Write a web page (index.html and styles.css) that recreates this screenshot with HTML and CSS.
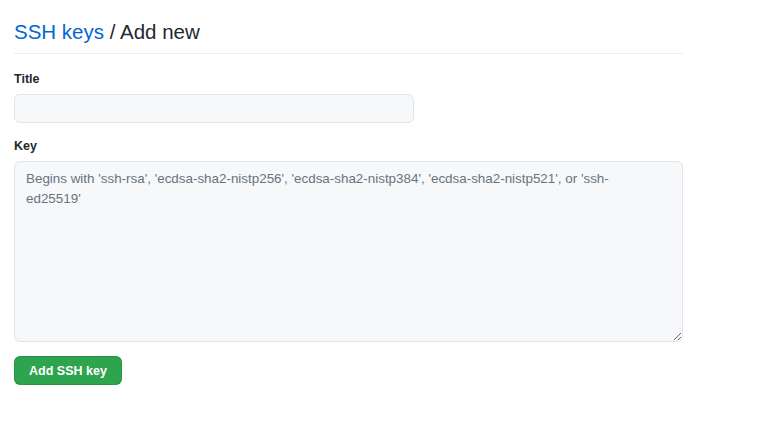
FILE: index.html
```html
<!DOCTYPE html>
<html lang="en">
<head>
<meta charset="utf-8">
<title>SSH keys / Add new</title>
<link rel="stylesheet" href="styles.css">
</head>
<body>
<main class="page">
  <div class="subhead">
    <h1 class="subhead-heading"><a class="crumb" href="#">SSH keys</a> / Add new</h1>
  </div>
  <form class="form">
    <div class="form-group">
      <label class="form-label" for="title">Title</label>
      <input class="input input-title" type="text" id="title">
    </div>
    <div class="form-group">
      <label class="form-label" for="key">Key</label>
      <textarea class="input input-key" id="key" placeholder="Begins with 'ssh-rsa', 'ecdsa-sha2-nistp256', 'ecdsa-sha2-nistp384', 'ecdsa-sha2-nistp521', or 'ssh-ed25519'"></textarea>
    </div>
    <button class="btn-primary" type="button">Add SSH key</button>
  </form>
</main>
</body>
</html>
```
FILE: styles.css
```css
* { box-sizing: border-box; }
html, body {
  margin: 0;
  padding: 0;
  background: #ffffff;
}
body {
  font-family: "Liberation Sans", Arial, Helvetica, sans-serif;
  color: #24292e;
}
.page {
  width: 683px;
  padding-left: 14px;
}
.subhead {
  padding-top: 20px;
  padding-bottom: 9px;
  border-bottom: 1px solid #eaecef;
}
.subhead-heading {
  margin: 0;
  font-size: 20.5px;
  line-height: 24px;
  font-weight: 400;
  color: #24292e;
}
.crumb {
  color: #0366d6;
  text-decoration: none;
}
.form {
  padding-top: 15px;
  display: flex;
  flex-direction: column;
  align-items: flex-start;
}
.form-group {
  display: flex;
  flex-direction: column;
  width: 100%;
  margin-bottom: 13px;
}
.form-label {
  font-size: 12.5px;
  line-height: 20px;
  font-weight: 700;
  margin-bottom: 5px;
  color: #24292e;
}
.input {
  font-family: "Liberation Sans", Arial, Helvetica, sans-serif;
  font-size: 13.4px;
  line-height: 20px;
  color: #24292e;
  background: #f6f8fa;
  border: 1px solid #e1e4e8;
  border-radius: 6px;
  outline: none;
  margin: 0;
}
.input-title {
  width: 400px;
  height: 29px;
  padding: 4px 11px;
}
.input-key {
  width: 669px;
  height: 181px;
  padding: 7px 50px 7px 11px;
  resize: vertical;
}
.input-key::placeholder {
  color: #6a737d;
  opacity: 1;
}
.form-group + .btn-primary { margin-top: 1px; }
.btn-primary {
  font-family: "Liberation Sans", Arial, Helvetica, sans-serif;
  font-size: 12.5px;
  font-weight: 700;
  line-height: 20px;
  white-space: nowrap;
  color: #ffffff;
  background: #2ea44f;
  border: 1px solid rgba(27, 31, 35, 0.15);
  border-radius: 6px;
  padding: 3px 0;
  height: 29px;
  width: 108px;
  text-align: center;
  cursor: pointer;
}
```
